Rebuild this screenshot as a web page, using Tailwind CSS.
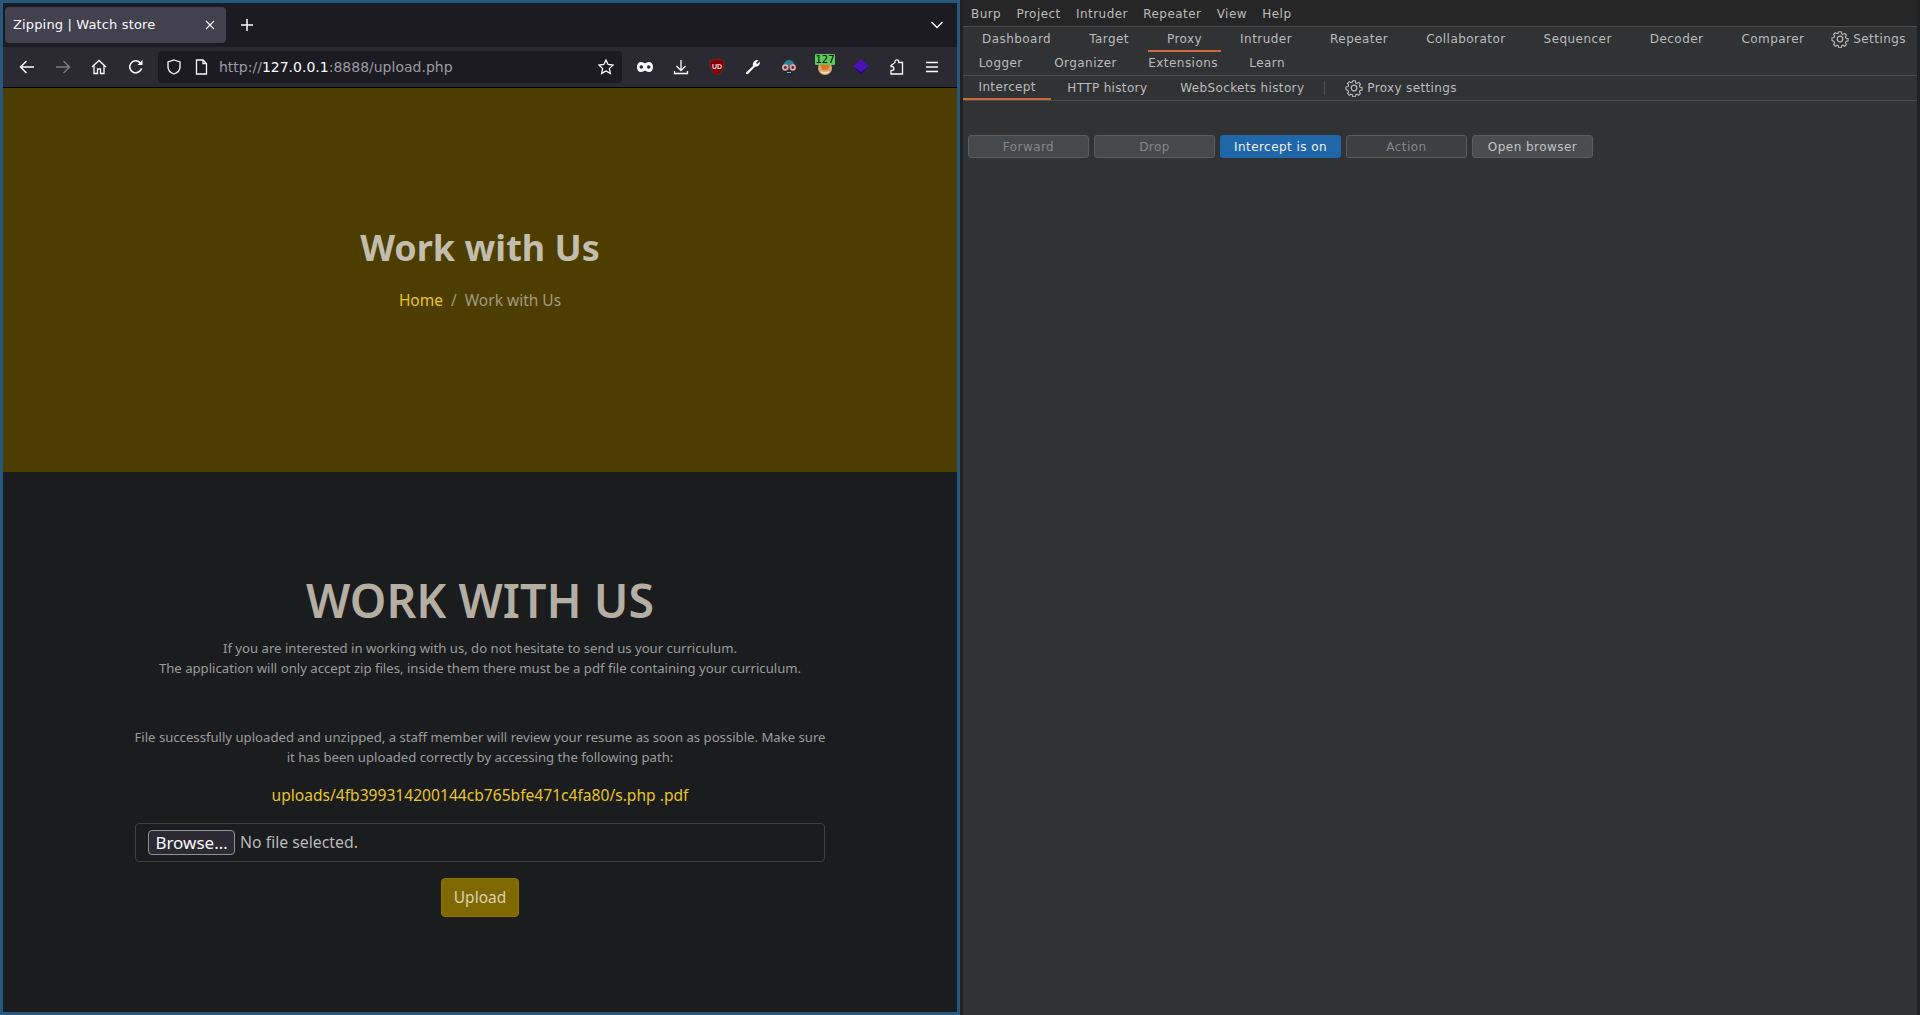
<!DOCTYPE html>
<html lang="en">
<head>
<meta charset="UTF-8">
<title>Zipping | Watch store</title>
<script src="https://cdn.jsdelivr.net/npm/@tailwindcss/browser@4"></script>
</head>
<body class="h-[1015px] w-[1920px] overflow-hidden bg-[#1f2123] flex font-['DejaVu_Sans',sans-serif]">

<!-- browser window -->
<div class="w-[960px] h-[1015px] shrink-0 border-[3px] border-[#26587f] flex flex-col bg-[#1a1c1e]">
  <!-- tab strip -->
  <div class="h-[44px] bg-[#1c1b22] flex items-center pl-[2px] pr-[14px] shrink-0">
    <div class="w-[221px] h-[36px] rounded-[4px] bg-[#42414d] flex items-center justify-between pl-[8px] pr-[11px] text-[13px] tracking-[0.15px] text-[#fbfbfe]">
      <span>Zipping | Watch store</span>
      <svg width="10" height="10" viewBox="0 0 10 10" fill="none" stroke="#fbfbfe" stroke-width="1.2"><path d="M1 1l8 8M9 1l-8 8"/></svg>
    </div>
    <svg class="ml-[15px]" width="12" height="12" viewBox="0 0 12 12" fill="none" stroke="#fbfbfe" stroke-width="1.5"><path d="M6 0v12M0 6h12"/></svg>
    <svg class="ml-auto" width="12" height="8" viewBox="0 0 12 8" fill="none" stroke="#fbfbfe" stroke-width="1.3"><path d="M.5 1l5.5 5.5L11.5 1"/></svg>
  </div>
  <!-- toolbar -->
  <div class="h-[41px] bg-[#2b2a33] border-b border-black flex items-center shrink-0 pl-[16px]">
    <svg width="16" height="16" viewBox="0 0 16 16" fill="none" stroke="#fbfbfe" stroke-width="1.4"><path d="M15 8H1.5M7.5 2L1.5 8l6 6"/></svg>
    <svg class="ml-[20px]" width="16" height="16" viewBox="0 0 16 16" fill="none" stroke="#7b7a82" stroke-width="1.4"><path d="M1 8h13.5M8.5 2l6 6-6 6"/></svg>
    <svg class="ml-[20px]" width="16" height="16" viewBox="0 0 16 16" fill="none" stroke="#fbfbfe" stroke-width="1.3"><path d="M1 8l7-6.500L15 8M3 6.500V14.500h3.500V10h3v4.500H13V6.500"/></svg>
    <svg class="ml-[21px]" width="16" height="16" viewBox="0 0 16 16" fill="none" stroke="#fbfbfe" stroke-width="1.5"><path d="M13.500 9.500A6 6 0 1 1 12 3.600"/><path d="M14.500 1v5h-5z" fill="#fbfbfe" stroke="none"/></svg>
    <!-- url bar -->
    <div class="ml-[14px] w-[464px] h-[32px] rounded-[4px] bg-[#1c1b22] flex items-center pl-[8px] pr-[8px]">
      <svg width="16" height="16" viewBox="0 0 16 16" fill="none" stroke="#fbfbfe" stroke-width="1.3"><path d="M8 1l6 2v5c0 3.500-2.700 5.800-6 7-3.300-1.200-6-3.500-6-7V3z"/></svg>
      <svg class="ml-[13px]" width="13" height="16" viewBox="0 0 13 16" fill="none" stroke="#fbfbfe" stroke-width="1.3"><path d="M1.500 1h6.500l3.500 3.500V15h-10zM8 1v3.500h3.500"/></svg>
      <span class="ml-[11px] text-[14px] text-[#9b9ba0]">http://<span class="text-[#fbfbfe]">127.0.0.1</span>:8888/upload.php</span>
      <svg class="ml-auto" width="16" height="16" viewBox="0 0 16 16" fill="none" stroke="#fbfbfe" stroke-width="1.3"><path d="M8 1l2.100 4.500 4.900.6-3.600 3.400.9 4.900L8 12l-4.300 2.400.9-4.900L1 6.100l4.900-.6z"/></svg>
    </div>
    <!-- extensions -->
    <div class="ml-[15px] flex items-center">
      <svg width="16" height="10" viewBox="0 0 16 10"><path d="M4 0c1.700 0 3 1 4 1.500C9 1 10.300 0 12 0c2.500 0 4 2 4 5s-1.500 5-4 5c-1.700 0-3-1-4-1.500C7 9 5.700 10 4 10 1.500 10 0 8 0 5s1.500-5 4-5z" fill="#fbfbfe"/><circle cx="4.300" cy="5" r="1.800" fill="#2b2a33"/><circle cx="11.700" cy="5" r="1.800" fill="#2b2a33"/></svg>
      <svg class="ml-[20px]" width="16" height="16" viewBox="0 0 16 16" fill="none" stroke="#fbfbfe" stroke-width="1.3"><path d="M8 1v10M3.500 7L8 11.500 12.500 7M1.500 12v2.500h13V12"/></svg>
      <svg class="ml-[20px]" width="16" height="16" viewBox="0 0 16 16"><path d="M8 0l7 2c0 6-1 11-7 14C2 13 1 8 1 2z" fill="#800008" stroke="#a52a2a" stroke-width=".5"/><text x="8" y="10" text-anchor="middle" font-size="7" font-weight="700" fill="#f3d9d9" font-family="Liberation Sans">UD</text></svg>
      <svg class="ml-[20px]" width="16" height="16" viewBox="0 0 16 16"><path d="M1 13.500L8 7c-.6-2.500.6-5.500 4-6 .6 0 1.200 0 1.500.2L11 3.800l1.200 1.200 2.600-2.400c.4 2.500-1 5.400-4.800 5.200L3 15c-1 .8-2.800-.4-2-1.500z" fill="#fbfbfe"/></svg>
      <svg class="ml-[20px]" width="16" height="16" viewBox="0 0 16 16"><path d="M2 7.500a6 6.500 0 0 1 12 0z" fill="#2f7f93"/><path d="M4 11h8v5H4z" fill="#1f2a30"/><circle cx="4.300" cy="8.500" r="3.200" fill="#e7a7a7"/><circle cx="11.700" cy="8.500" r="3.200" fill="#e7a7a7"/><circle cx="4.300" cy="8.500" r="1.400" fill="#5a2b30"/><circle cx="11.700" cy="8.500" r="1.400" fill="#5a2b30"/><path d="M6 13.500h4" stroke="#7fb0b8" stroke-width="1"/></svg>
      <!-- extension with counter badge -->
      <div class="ml-[20px] relative w-[16px] h-[16px]">
        <svg width="16" height="16" viewBox="0 0 16 16"><circle cx="8" cy="9" r="7" fill="#d9a878"/><path d="M3 6h10l-2 5H5z" fill="#e8731f"/><path d="M4 12.500c2 2 6 2 8 0" stroke="#f3e3c8" stroke-width="1.500" fill="none"/></svg>
        <span class="absolute left-[-2px] top-[-5px] w-[20px] h-[11px] rounded-[1px] bg-[#5cc95c] text-[10px] leading-[11px] text-black text-center">127</span>
      </div>
      <svg class="ml-[20px]" width="16" height="16" viewBox="0 0 16 16"><path d="M8 0l8 7.500L8 13 0 7.500z" fill="#4a12b8"/><path d="M0 7.500L8 13l8-5.500L8 16z" fill="#2a0a78"/></svg>
      <svg class="ml-[20px]" width="15" height="16" viewBox="0 0 15 16" fill="none" stroke="#fbfbfe" stroke-width="1.300"><path d="M6 3.500V2.700a1.900 1.900 0 0 1 3.800 0v.8h3.700v11.500H2v-3.700h1a1.900 1.900 0 0 0 0-3.800H2V6.500l4-3z"/></svg>
      <svg class="ml-[21px]" width="14" height="12" viewBox="0 0 14 12" fill="none" stroke="#fbfbfe" stroke-width="1.300"><path d="M1 1.500h12M1 6h12M1 10.500h12"/></svg>
    </div>
  </div>

  <!-- page -->
  <div class="flex-1 flex flex-col font-['Noto_Sans',sans-serif]">
    <div class="h-[384px] bg-[#4d3e00] flex flex-col items-center pt-[136px] shrink-0">
      <h1 class="text-[36px] leading-[48px] font-bold text-[#c2bdae]">Work with Us</h1>
      <div class="mt-[16px] text-[15.5px] leading-[24px] flex gap-[8px]">
        <span class="text-[#e8c42e]">Home</span>
        <span class="text-[#a09a86]">/</span>
        <span class="text-[#a09a86]">Work with Us</span>
      </div>
    </div>
    <div class="flex flex-col items-center pt-[99px]">
      <h2 class="text-[46.500px] leading-[58px] font-semibold text-[#b5aea3]">WORK WITH US</h2>
      <p class="mt-[9px] text-[13.150px] leading-[20px] text-[#9c9c9c] text-center">If you are interested in working with us, do not hesitate to send us your curriculum.<br>The application will only accept zip files, inside them there must be a pdf file containing your curriculum.</p>
      <p class="mt-[49px] w-[695px] text-[13.150px] leading-[20px] text-[#9c9c9c] text-center">File successfully uploaded and unzipped, a staff member will review your resume as soon as possible. Make sure it has been uploaded correctly by accessing the following path:</p>
      <p class="mt-[17px] text-[15.6px] leading-[22px] text-[#e8c42e]">uploads/4fb399314200144cb765bfe471c4fa80/s.php .pdf</p>
      <div class="mt-[17px] w-[690px] h-[39px] border border-[#3f4347] rounded-[4px] flex items-center pl-[12px] text-[16px] text-[#b9b9b9]">
        <span class="h-[25px] w-[87px] rounded-[4px] border border-[#8f8f9d] bg-[#2b2a33] text-[17px] text-[#fbfbfe] flex items-center justify-center">Browse…</span>
        <span class="ml-[5px] text-[15.8px]">No file selected.</span>
      </div>
      <button class="mt-[16px] w-[78px] h-[39px] rounded-[4px] border border-[#8c7400] bg-[#806800] text-[15.5px] text-[#d8d2b8]">Upload</button>
    </div>
  </div>
</div>

<div class="w-[3px] shrink-0 bg-[#1f2123]"></div>

<!-- burp window -->
<div class="w-[954px] h-[1015px] shrink-0 bg-[#303234] flex flex-col text-[12px] text-[#bcbcbc] tracking-[0.45px]">
  <div class="h-[27px] shrink-0 bg-[#262626] border-b border-[#4a4c4e] flex items-center gap-[15.300px] pl-[8px] pt-[2px]">
    <span>Burp</span><span>Project</span><span>Intruder</span><span>Repeater</span><span>View</span><span>Help</span>
  </div>
  <div class="h-[25px] shrink-0 flex items-center pr-[11px]">
    <span class="px-[19px] pb-[2px] h-full flex items-center">Dashboard</span>
    <span class="px-[19px] pb-[2px] h-full flex items-center">Target</span>
    <span class="px-[19px] h-full flex items-center border-b-[2px] border-[#cd6a3c]">Proxy</span>
    <span class="px-[19px] pb-[2px] h-full flex items-center">Intruder</span>
    <span class="px-[19px] pb-[2px] h-full flex items-center">Repeater</span>
    <span class="px-[19px] pb-[2px] h-full flex items-center">Collaborator</span>
    <span class="px-[19px] pb-[2px] h-full flex items-center">Sequencer</span>
    <span class="px-[19px] pb-[2px] h-full flex items-center">Decoder</span>
    <span class="px-[19px] pb-[2px] h-full flex items-center">Comparer</span>
    <span class="ml-auto pb-[1px] flex items-center gap-[4px]">
      <svg width="18" height="18" viewBox="0 0 18 18" fill="none" stroke="#bcbcbc" stroke-width="1.200"><circle cx="9" cy="9" r="2.800"/><path d="M7.600 1h2.800l.4 2.200 1.500.7 1.900-1.200 2 2-1.200 1.900.7 1.500 2.200.4v2.800l-2.200.4-.7 1.500 1.200 1.900-2 2-1.900-1.200-1.500.7-.4 2.200H7.600l-.4-2.200-1.500-.7-1.900 1.200-2-2 1.200-1.900-.7-1.500L.1 10.500V7.700l2.200-.4.7-1.500-1.200-1.900 2-2 1.900 1.200 1.500-.7z" transform="translate(.9 .9) scale(.9)"/></svg>
      Settings
    </span>
  </div>
  <div class="h-[24px] shrink-0 border-b border-[#4a4c4e] flex items-center pb-[1px]">
    <span class="px-[15.700px]">Logger</span><span class="px-[15.700px]">Organizer</span><span class="px-[15.700px]">Extensions</span><span class="px-[15.700px]">Learn</span>
  </div>
  <div class="h-[25px] shrink-0 border-b border-[#4a4c4e] flex items-center tracking-[0.35px]">
    <span class="px-[15.500px] h-full flex items-center border-b-[2px] border-[#cd6a3c]">Intercept</span>
    <span class="px-[16px] h-full flex items-center">HTTP history</span>
    <span class="px-[17px] h-full flex items-center">WebSockets history</span>
    <span class="w-px h-[14px] bg-[#4a4c4e] ml-[3px]"></span>
    <span class="ml-[20px] flex items-center gap-[4px]">
      <svg width="18" height="18" viewBox="0 0 18 18" fill="none" stroke="#bcbcbc" stroke-width="1.200"><circle cx="9" cy="9" r="2.800"/><path d="M7.600 1h2.800l.4 2.200 1.500.7 1.900-1.200 2 2-1.200 1.900.7 1.500 2.200.4v2.800l-2.200.4-.7 1.500 1.200 1.900-2 2-1.900-1.200-1.500.7-.4 2.200H7.600l-.4-2.200-1.500-.7-1.900 1.200-2-2 1.200-1.900-.7-1.500L.1 10.500V7.700l2.200-.4.7-1.500-1.200-1.900 2-2 1.900 1.200 1.500-.7z" transform="translate(.9 .9) scale(.9)"/></svg>
      Proxy settings
    </span>
  </div>
  <div class="mt-[34px] flex gap-[5px] pl-[5px]">
    <span class="w-[121px] h-[23px] rounded-[3px] border border-[#5a5c5e] bg-[#46494b] text-[#84878a] flex items-center justify-center">Forward</span>
    <span class="w-[121px] h-[23px] rounded-[3px] border border-[#5a5c5e] bg-[#46494b] text-[#84878a] flex items-center justify-center">Drop</span>
    <span class="w-[121px] h-[23px] rounded-[3px] bg-[#1f67a8] text-[#f0f0f0] flex items-center justify-center">Intercept is on</span>
    <span class="w-[121px] h-[23px] rounded-[3px] border border-[#5a5c5e] bg-[#3d4042] text-[#84878a] flex items-center justify-center">Action</span>
    <span class="w-[121px] h-[23px] rounded-[3px] border border-[#5a5c5e] bg-[#4a4d50] text-[#c4c4c4] flex items-center justify-center">Open browser</span>
  </div>
</div>

<div class="w-[3px] shrink-0 bg-[#1f2123]"></div>
</body>
</html>
